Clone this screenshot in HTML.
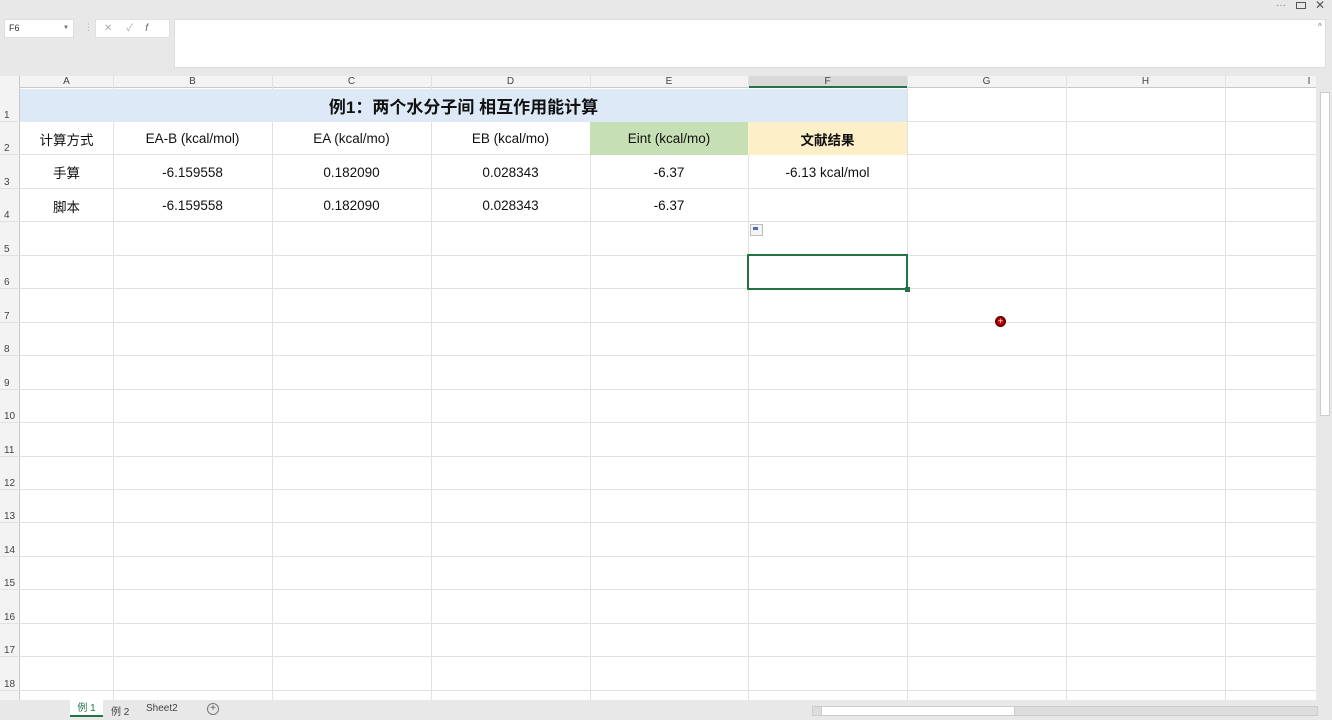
<!DOCTYPE html>
<html><head><meta charset="utf-8"><style>
*{margin:0;padding:0;box-sizing:border-box}
body{width:1332px;height:720px;overflow:hidden;background:#e8e8e8;font-family:"Liberation Sans","Noto Sans CJK SC",sans-serif;position:relative}
.a{position:absolute}
.t{position:absolute;display:flex;align-items:center;justify-content:center;font-size:13.5px;color:#111}
.ch{position:absolute;top:76px;height:12px;font-size:10px;color:#444;text-align:center;line-height:12px}
.rh{position:absolute;left:0;width:19px;font-size:10px;color:#444;text-align:left;padding-left:4px}
</style></head><body>
<div class="a" style="left:4px;top:19px;width:70px;height:19px;background:#fff;border:1px solid #ddd;font-size:9px;line-height:17px;padding-left:4px;color:#333">F6<span style="position:absolute;right:4px;font-size:6px;color:#666">▼</span></div>
<div class="a" style="left:84px;top:22px;color:#aaa;font-size:9px">⋮</div>
<div class="a" style="left:95px;top:19px;width:75px;height:19px;background:#fff;border:1px solid #e0e0e0;font-size:10px;color:#aaa;line-height:17px"><span style="margin-left:8px">✕</span><span style="margin-left:14px">✓</span><span style="margin-left:12px;font-style:italic;color:#666">f</span></div>
<div class="a" style="left:174px;top:19px;width:1152px;height:49px;background:#fff;border:1px solid #ddd"></div>
<div class="a" style="left:1318px;top:22px;font-size:8px;color:#666">^</div>
<div class="a" style="left:1276px;top:0;font-size:10px;color:#777">···</div>
<div class="a" style="left:1296px;top:2px;width:10px;height:7px;border:1.5px solid #555"></div>
<div class="a" style="left:1315px;top:-2px;font-size:12px;color:#555">✕</div>
<div class="a" style="left:0;top:76px;width:1316px;height:624px;background:#fff"></div>
<div class="a" style="left:0;top:76px;width:1316px;height:12px;background:#f3f3f3;border-bottom:1px solid #c8c8c8"></div>
<div class="a" style="left:0;top:76px;width:20px;height:624px;background:#f3f3f3;border-right:1px solid #c8c8c8"></div>
<div class="a" style="left:748px;top:76px;width:159px;height:12px;background:#d9d9d9;border-bottom:2px solid #217346"></div>
<div id="g"></div>
<div class="t" style="left:20px;top:89px;width:887px;height:33px;background:#dde9f6;font-weight:bold;font-size:17px">例1：两个水分子间 相互作用能计算</div>
<div class="t" style="left:590px;top:122px;width:158px;height:33px;background:#c6dfb4">Eint (kcal/mo)</div>
<div class="t" style="left:748px;top:122px;width:159px;height:33px;background:#fdf0c8;font-weight:bold">文献结果</div>
<div class="t" style="left:20px;top:122px;width:93px;height:33px">计算方式</div>
<div class="t" style="left:113px;top:122px;width:159px;height:33px">EA-B (kcal/mol)</div>
<div class="t" style="left:272px;top:122px;width:159px;height:33px">EA (kcal/mo)</div>
<div class="t" style="left:431px;top:122px;width:159px;height:33px">EB (kcal/mo)</div>
<div class="t" style="left:20px;top:155px;width:93px;height:34px">手算</div>
<div class="t" style="left:113px;top:155px;width:159px;height:34px">-6.159558</div>
<div class="t" style="left:272px;top:155px;width:159px;height:34px">0.182090</div>
<div class="t" style="left:431px;top:155px;width:159px;height:34px">0.028343</div>
<div class="t" style="left:590px;top:155px;width:158px;height:34px">-6.37</div>
<div class="t" style="left:748px;top:155px;width:159px;height:34px">-6.13 kcal/mol</div>
<div class="t" style="left:20px;top:189px;width:93px;height:33px">脚本</div>
<div class="t" style="left:113px;top:189px;width:159px;height:33px">-6.159558</div>
<div class="t" style="left:272px;top:189px;width:159px;height:33px">0.182090</div>
<div class="t" style="left:431px;top:189px;width:159px;height:33px">0.028343</div>
<div class="t" style="left:590px;top:189px;width:158px;height:33px">-6.37</div>
<div class="a" style="left:750px;top:224px;width:13px;height:12px;border:1px solid #bbb;background:#f4f4f8"><div class="a" style="left:2px;top:2px;width:5px;height:3px;background:#4a6fb0"></div></div>
<div class="a" style="left:747px;top:254px;width:161px;height:36px;border:2px solid #217346"></div>
<div class="a" style="left:905px;top:287px;width:5px;height:5px;background:#217346"></div>
<div class="a" style="left:995px;top:316px;width:11px;height:11px;border-radius:50%;background:#c00;border:2px solid #600;color:#fff;font-size:9px;line-height:7px;text-align:center">+</div>
<div class="ch" style="left:20px;width:93px">A</div>
<div class="ch" style="left:113px;width:159px">B</div>
<div class="ch" style="left:272px;width:159px">C</div>
<div class="ch" style="left:431px;width:159px">D</div>
<div class="ch" style="left:590px;width:158px">E</div>
<div class="ch" style="left:748px;width:159px">F</div>
<div class="ch" style="left:907px;width:159px">G</div>
<div class="ch" style="left:1066px;width:159px">H</div>
<div class="ch" style="left:1225px;width:168px">I</div>
<div class="a" style="left:1316px;top:76px;width:16px;height:624px;background:#e8e8e8"></div>
<div class="a" style="left:1320px;top:92px;width:10px;height:324px;background:#fff;border:1px solid #ccc"></div>
<div class="a" style="left:0;top:700px;width:1332px;height:20px;background:#e8e8e8"></div>
<div class="a" style="left:70px;top:700px;width:33px;height:17px;background:#fff;border-bottom:2px solid #217346;font-size:10px;color:#217346;text-align:center;line-height:17px">例 1</div>
<div class="a" style="left:111px;top:703px;font-size:10px;color:#444">例 2</div>
<div class="a" style="left:146px;top:703px;font-size:10px;color:#444">Sheet2</div>
<div class="a" style="left:207px;top:703px;width:12px;height:12px;border:1px solid #777;border-radius:50%;font-size:10px;line-height:10px;text-align:center;color:#555">+</div>
<div class="a" style="left:812px;top:706px;width:506px;height:10px;background:#ddd;border:1px solid #ccc"></div>
<div class="a" style="left:821px;top:706px;width:194px;height:10px;background:#fff;border:1px solid #ccc"></div>
<script>
var g=document.getElementById('g'),h='';
var cols=[113,272,431,590,748,907,1066,1225];
cols.forEach(function(x){h+='<div class="a" style="left:'+x+'px;top:76px;width:1px;height:624px;background:#e1e1e1"></div>';});
for(var i=1;i<=18;i++){var b=i==1?122:Math.round(122+(i-1)*33.45);
h+='<div class="a" style="left:0;top:'+(b-1)+'px;width:1316px;height:1px;background:#e1e1e1"></div>';
h+='<div class="rh" style="top:'+(b-12)+'px">'+i+'</div>';}
g.innerHTML=h;
</script>
</body></html>
